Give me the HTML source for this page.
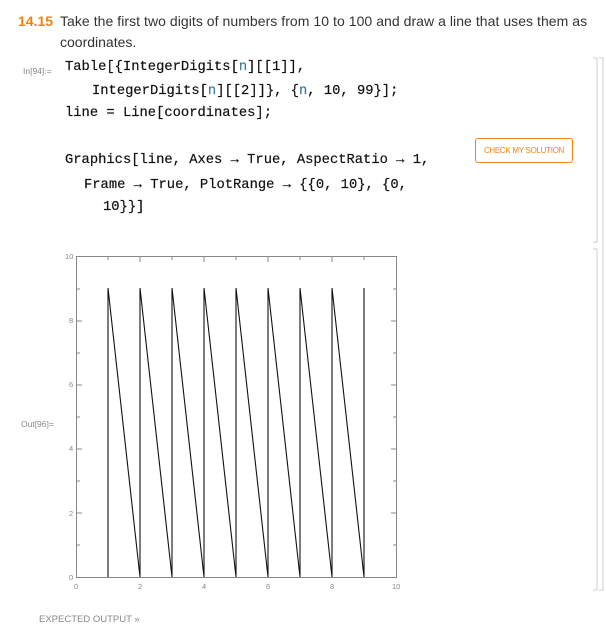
<!DOCTYPE html>
<html><head><style>
body{margin:0;width:606px;height:637px;background:#fff;position:relative;overflow:hidden;font-family:"Liberation Sans",sans-serif}
.a{position:absolute;white-space:pre}
.code{font-family:"Liberation Mono",monospace;font-size:13.8px;letter-spacing:0;color:#111;-webkit-text-stroke:0.2px #111}
.n{color:#3a7a9c;-webkit-text-stroke:0.2px #3a7a9c}
.lbl{font-size:8.5px;color:#888}
</style></head><body>
<div class="a" style="left:18px;top:13px;font-size:14px;color:#f0830e;font-weight:bold">14.15</div>
<div class="a" style="left:60px;top:13px;font-size:14px;color:#333;letter-spacing:0.05px">Take the first two digits of numbers from 10 to 100 and draw a line that uses them as</div>
<div class="a" style="left:60px;top:34px;font-size:14px;color:#333">coordinates.</div>
<div class="a lbl" style="left:23px;top:66px">In[94]:=</div>
<div class="a code" style="left:65px;top:60px">Table[{IntegerDigits[<span class="n">n</span>][[1]],</div>
<div class="a code" style="left:92px;top:84px">IntegerDigits[<span class="n">n</span>][[2]]}, {<span class="n">n</span>, 10, 99}];</div>
<div class="a code" style="left:65px;top:106px">line = Line[coordinates];</div>
<div class="a code" style="left:65px;top:153px">Graphics[line, Axes → True, AspectRatio → 1,</div>
<div class="a code" style="left:84px;top:178px">Frame → True, PlotRange → {{0, 10}, {0,</div>
<div class="a code" style="left:103px;top:200px">10}}]</div>
<div class="a" style="left:475px;top:138px;width:96px;height:23px;border:1px solid #f0830e;border-radius:3px;font-size:8px;color:#f0830e;text-align:center;line-height:23px;letter-spacing:-0.3px">CHECK MY SOLUTION</div>
<div class="a lbl" style="left:21px;top:419px">Out[96]=</div>
<div class="a" style="left:39px;top:614px;font-size:9.5px;color:#888">EXPECTED OUTPUT »</div>
<svg class="a" style="left:0;top:0" width="606" height="637">
<g stroke="#ccc" fill="none">
<path d="M593 58h4v184h-4M593 249h4v341h-4M599 58h4v532h-4"/>
</g>
<rect x="76.5" y="256.5" width="320" height="321" stroke="#888" fill="none"/>
<g font-size="7.5" fill="#888" font-family="Liberation Sans">
<text x="65" y="259">10</text><text x="69" y="323">8</text><text x="69" y="387">6</text><text x="69" y="451">4</text><text x="69" y="516">2</text><text x="69" y="580">0</text>
<text x="74" y="589">0</text><text x="138" y="589">2</text><text x="202" y="589">4</text><text x="266" y="589">6</text><text x="330" y="589">8</text><text x="392" y="589">10</text>
</g>
<g stroke="#888">
<path d="M108 577v-3M140 577v-5M172 577v-3M204 577v-5M236 577v-3M268 577v-5M300 577v-3M332 577v-5M364 577v-3
M108 257v3M140 257v5M172 257v3M204 257v5M236 257v3M268 257v5M300 257v3M332 257v5M364 257v3
M77 545h3M77 513h5M77 481h3M77 449h5M77 417h3M77 385h5M77 353h3M77 321h5M77 289h3
M396 545h-3M396 513h-5M396 481h-3M396 449h-5M396 417h-3M396 385h-5M396 353h-3M396 321h-5M396 289h-3"/>
</g>
<path fill="none" stroke="#111" stroke-width="1.1" d="M108 577V288L140 577V288L172 577V288L204 577V288L236 577V288L268 577V288L300 577V288L332 577V288L364 577V288"/>
</svg>
</body></html>
